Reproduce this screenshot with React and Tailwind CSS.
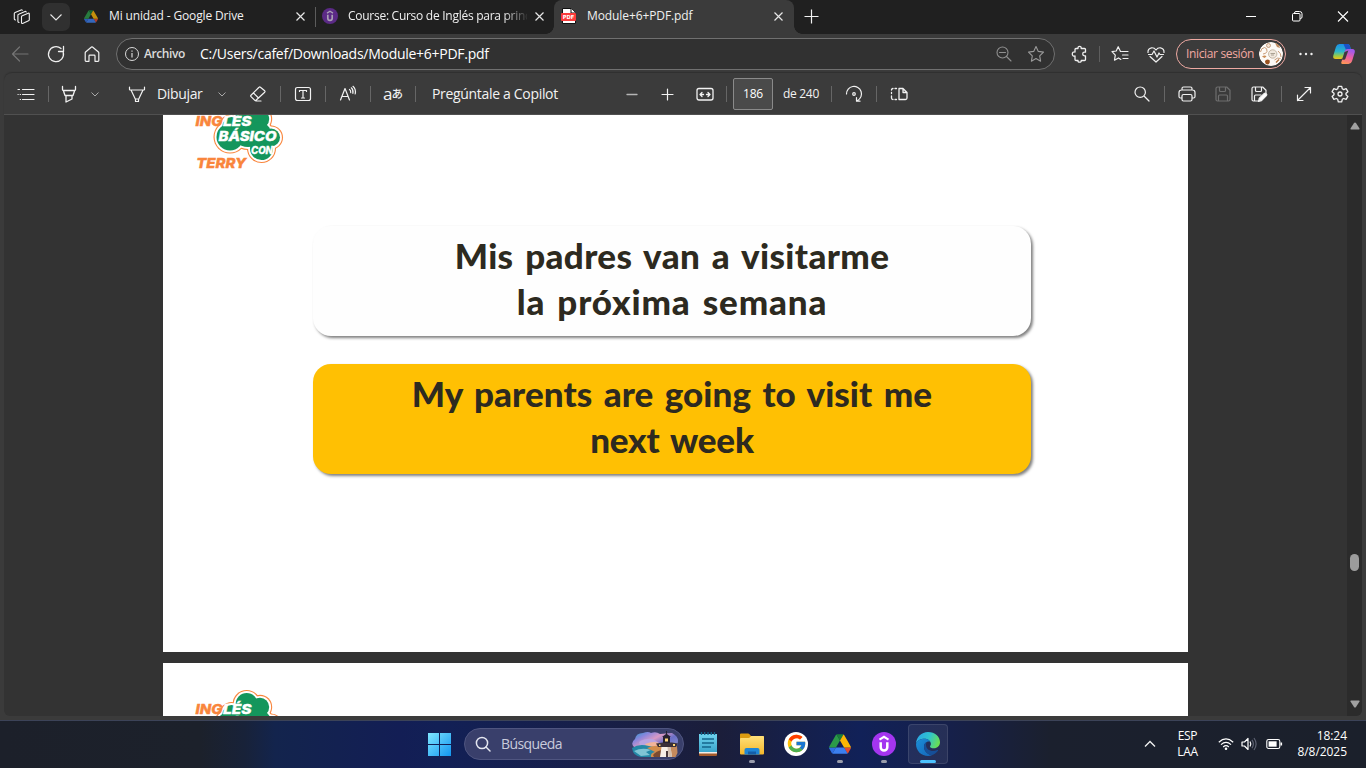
import React from "react";
import { FcGoogle } from "react-icons/fc";

/* 20px line icon; every path is stroked */
function Icon({ d, className = "", sw = 1.1, children, fill = "none" }) {
  return (
    <svg
      viewBox="0 0 20 20"
      className={"h-5 w-5 shrink-0 " + className}
      fill={fill}
      stroke="currentColor"
      strokeWidth={sw}
      strokeLinecap="round"
      strokeLinejoin="round"
    >
      {d && <path d={d} />}
      {children}
    </svg>
  );
}

function Close({ className = "" }) {
  return (
    <svg viewBox="0 0 12 12" className={"h-3 w-3 shrink-0 " + className} fill="none" stroke="#e6e6e6" strokeWidth="1.2">
      <path d="M2.500 2.500l8 8M10.500 2.500l-8 8" />
    </svg>
  );
}

function Drive({ className = "" }) {
  return (
    <svg viewBox="0 0 87.3 78" className={"shrink-0 " + className}>
      <path fill="#2f6fe4" d="m6.6 66.85 3.85 6.65c.8 1.4 1.95 2.5 3.3 3.3l13.75-23.8h-27.5c0 1.55.4 3.1 1.2 4.5z" />
      <path fill="#2b9a48" d="m43.65 25-13.75-23.8c-1.35.8-2.5 1.9-3.3 3.3l-25.4 44a9.06 9.06 0 0 0-1.2 4.5h27.5z" />
      <path fill="#e2492f" d="m73.55 76.8c1.35-.8 2.5-1.9 3.3-3.3l1.6-2.75 7.65-13.25c.8-1.4 1.2-2.95 1.2-4.5h-27.502l5.852 11.5z" />
      <path fill="#188038" d="m43.65 25 13.75-23.8c-1.35-.8-2.9-1.2-4.5-1.2h-18.5c-1.6 0-3.15.45-4.5 1.2z" />
      <path fill="#3b7ff0" d="m59.8 53h-32.3l-13.75 23.8c1.35.8 2.9 1.2 4.5 1.2h50.8c1.6 0 3.15-.45 4.5-1.2z" />
      <path fill="#fbb604" d="m73.4 26.5-12.7-22c-.8-1.4-1.95-2.5-3.3-3.3l-13.75 23.8 16.15 28h27.45c0-1.55-.4-3.1-1.2-4.5z" />
    </svg>
  );
}

function Udemy({ className = "", bg = "#a435f0", fg = "#fff" }) {
  return (
    <svg viewBox="0 0 24 24" className={"shrink-0 " + className}>
      <circle cx="12" cy="12" r="12" fill={bg} />
      <path d="M8.700 10.200v5a3.300 3.300 0 0 0 6.600 0v-5" fill="none" stroke={fg} strokeWidth="2.500" />
      <path d="M7.500 7.600L12 4.800l4.500 2.800" fill="none" stroke={fg} strokeWidth="2" />
    </svg>
  );
}

function TabBar() {
  return (
    <div className="flex h-[34px] shrink-0 items-center bg-[#202020] pb-[2px] text-[12px] text-[#f0f0f0]">
      <Icon className="ml-3" sw={1.1}>
        <path d="M9.500 10.800q0-.8.8-1.100l5.900-2.500q1.100-.4 1.100.8v5.700q0 .8-.8 1.100l-5.900 2.600q-1.100.4-1.100-.8z" />
        <path d="M7 16.500l-.5-.3q-.6-.3-.6-1V9.300q0-.8.8-1.100l6.300-2.700q.8-.3 1.200.4" />
        <path d="M3.400 14l-.5-.3q-.6-.3-.6-1V7.500q0-.8.8-1.100l6-2.500q.8-.3 1.200.3" />
      </Icon>
      <div className="ml-[10px] mt-[2px] flex h-7 w-7 shrink-0 items-center justify-center rounded-[7px] bg-[#303030]">
        <svg viewBox="0 0 14 14" className="h-[14px] w-[14px]" fill="none" stroke="#e8e8e8" strokeWidth="1.1">
          <path d="M1.500 4.500L7 10l5.500-5.500" />
        </svg>
      </div>
      <Drive className="ml-[14px] h-[13px] w-[14px] opacity-75" />
      <div className="ml-[11px] w-[181px] whitespace-nowrap tracking-[-0.14px]">Mi unidad - Google Drive</div>
      <Close className="ml-1" />
      <div className="ml-[9px] mt-[2px] h-5 w-px bg-[#5c5c5c]" />
      <Udemy className="ml-[6px] h-4 w-4" bg="#5b2a86" fg="#aaa0b5" />
      <div className="ml-[10px] w-[179px] overflow-hidden whitespace-nowrap tracking-[-0.27px] [mask-image:linear-gradient(to_right,black_155px,transparent_181px)]">
        Course: Curso de Inglés para princ
      </div>
      <Close className="ml-[6px]" />
      <div className="relative ml-[9px] mt-[2px] flex h-[34px] w-[240px] shrink-0 items-center rounded-t-[8px] bg-[#3b3b3b] pb-[2px]">
        <div className="absolute -left-2 bottom-0 h-2 w-2 bg-[radial-gradient(circle_at_0_0,#202020_7.500px,#3b3b3b_8px)]" />
        <div className="absolute -right-2 bottom-0 h-2 w-2 bg-[radial-gradient(circle_at_100%_0,#202020_7.500px,#3b3b3b_8px)]" />
        <svg viewBox="0 0 16 16" className="ml-[7px] h-4 w-4 shrink-0">
          <path d="M1.500.5h9l4 4v11h-13z" fill="#fff" stroke="#111" />
          <path d="M10 .5v4.500h4.500" fill="#fff" stroke="#111" />
          <rect x="0" y="5" width="15" height="8" rx="1" fill="#fb3b3b" />
          <text x="1.800" y="11" fontSize="5.500" fontWeight="bold" fontFamily="DejaVu Sans" fill="#fff" textLength="11.500" lengthAdjust="spacingAndGlyphs">PDF</text>
        </svg>
        <div className="ml-[10px] w-[181px] whitespace-nowrap tracking-[-0.1px]">Module+6+PDF.pdf</div>
        <Close className="ml-1" />
      </div>
      <svg viewBox="0 0 16 16" className="ml-[9px] h-4 w-4 shrink-0" stroke="#f2f2f2" strokeWidth="1.2">
        <path d="M8.500 1.500v14M1.500 8.500h14" />
      </svg>
      <div className="ml-auto flex items-center gap-[34px] pr-[17px]">
        <svg viewBox="0 0 12 12" className="h-3 w-3" stroke="#fff"><path d="M1 6.500h10" /></svg>
        <svg viewBox="0 0 12 12" className="h-3 w-3" fill="none" stroke="#fff">
          <rect x="1.500" y="3.500" width="7.500" height="7.500" rx="1" />
          <path d="M3.500 3.500V3q0-1.500 1.500-1.500h3.500q2.500 0 2.500 2.200v3.300q0 1.500-1.500 1.500h-.5" />
        </svg>
        <svg viewBox="0 0 12 12" className="h-3 w-3" stroke="#fff" strokeWidth="1.1"><path d="M1 1.500l10 10M11 1.500l-10 10" /></svg>
      </div>
    </div>
  );
}

function Avatar() {
  return (
    <svg viewBox="0 0 24 24" className="ml-[5px] h-6 w-6 shrink-0">
      <clipPath id="av"><circle cx="12" cy="12" r="12" /></clipPath>
      <g clipPath="url(#av)">
        <circle cx="12" cy="12" r="12" fill="#fdfaf6" />
        <path d="M1.500 10q.5-4 4-4.500 3 .5 2.500 4-1 2.500-4 2.500" fill="none" stroke="#c79a76" />
        <circle cx="9.500" cy="3.500" r="2" fill="#f3e2d3" stroke="#b5835c" strokeWidth=".7" />
        <path d="M16 1q4 0 5 5l-3-1z" fill="#c08c62" />
        <path d="M3 14.500q3-2 4.500 0l-2 1.500z" fill="#c98d57" />
        <path d="M6 19q1.500-2.500 4.500-1 1 3-1.500 4.500-3 0-3-3.500z" fill="#9a5220" />
        <path d="M15.500 18q3-3 6-1.500M19 9q3 2 3 6" fill="none" stroke="#c79a76" />
        <path d="M17 20.500l3-3" stroke="#b5713c" strokeWidth="1.500" />
        <circle cx="13.700" cy="12" r="4.200" fill="#f0e8dd" stroke="#b9ab98" strokeWidth=".8" />
        <path d="M11.500 11.500h4.500M12 13h3" stroke="#9b9080" strokeWidth=".8" />
      </g>
    </svg>
  );
}

function Copilot() {
  return (
    <svg viewBox="0 0 24 24" className="ml-[18px] h-6 w-6 shrink-0">
      <defs>
        <linearGradient id="cpa" x1="0" y1="0" x2="0" y2="1">
          <stop offset="0" stopColor="#1b8fe8" /><stop offset=".5" stopColor="#2db6c8" /><stop offset=".8" stopColor="#9ccb45" /><stop offset="1" stopColor="#f2c21a" />
        </linearGradient>
        <linearGradient id="cpb" x1=".3" y1="0" x2="0" y2="1">
          <stop offset="0" stopColor="#a259e8" /><stop offset=".45" stopColor="#ee5fa0" /><stop offset="1" stopColor="#ffa04a" />
        </linearGradient>
      </defs>
      <path d="M7.500 2h8q1.800 0 2.400 1.800L18.700 7h-3q-1.600 0-2.200 1.700L11 15.500Q10.300 17 8.500 17H3.800q-3.300 0-2.500-3.500L4 4.800Q4.900 2 7.500 2z" fill="url(#cpa)" />
      <path d="M11.500 2h4q1.800 0 2.400 1.800L18.700 7h-3q-1.200 0-1.800.8z" fill="#1b52c9" />
      <path d="M16.500 22h-6q-1.300 0-1.300-1.500L11 15.300 13 8.700Q13.700 7 15.500 7h4.700q3.300 0 2.500 3.500L20 19.200Q19.100 22 16.500 22z" fill="url(#cpb)" />
      <path d="M16.300 8.500L13.300 17q-.3.800-1.200.8h-2L12.500 10z" fill="#3b3b3b" />
    </svg>
  );
}

function AddressBar() {
  return (
    <div className="flex h-[39px] shrink-0 items-center bg-[#3b3b3b] text-[#f0f0f0]">
      <Icon className="ml-[10px] text-[#747474]" d="M18 10H2.500M9.500 3L2.500 10l7 7" sw={1.2} />
      <Icon className="ml-4" sw={1.3} d="M17.300 8.500A7.500 7.500 0 1 1 15 4.600M17.500 2.500v5h-5" />
      <Icon className="ml-4" sw={1.2} d="M3.200 8.900v7.600q0 .8.800.8h3V12q0-.8.800-.8h4.400q.8 0 .8.800v5.300h3q.8 0 .8-.8V8.900q0-.5-.4-.9L10.500 3q-.5-.4-1 0L3.600 8q-.4.400-.4.900z" />
      <div className="ml-[14px] flex h-8 w-[939px] shrink-0 items-center rounded-full border border-[#707070] bg-[#313131]">
        <svg viewBox="0 0 16 16" className="ml-[7px] h-4 w-4 shrink-0" fill="none" stroke="#d8d8d8">
          <circle cx="8" cy="8" r="6.500" /><path d="M8 7v4.500M8 4.500v1.200" strokeWidth="1.2" />
        </svg>
        <div className="ml-1 w-[56px] whitespace-nowrap text-[12px] font-semibold tracking-[-0.4px] text-[#dcdcdc]">Archivo</div>
        <div className="w-[795px] whitespace-nowrap text-[14px] tracking-[-0.27px] text-white">C:/Users/cafef/Downloads/Module+6+PDF.pdf</div>
        <Icon className="-ml-px text-[#8f8f8f]" d="M12.500 12.500l4.500 4.500M5.500 8.500h6">
          <circle cx="8.500" cy="8.500" r="5.500" />
        </Icon>
        <Icon className="ml-3 text-[#9a9a9a]" d="M10 2.500l2.300 4.900 5.200.7-3.800 3.700.9 5.400L10 14.600l-4.600 2.600.9-5.400L2.500 8.100l5.200-.7z" />
      </div>
      <Icon className="ml-[14px]" sw={1.3} d="M7 4.500h2q-.2-2.200 1.600-2.200t1.600 2.200h3.300q1 0 1 1v2.700h-1q-1.800 0-1.800 1.800t1.800 1.800h1v3.700q0 1-1 1h-3.300q.3 1.700-1.600 1.700t-1.600-1.700H7q-1 0-1-1v-3.500q-2.700.3-2.700-2t2.700-2V5.500q0-1 1-1z" />
      <div className="ml-[10px] h-4 w-px bg-[#5e5e5e]" />
      <Icon className="ml-[10px]" sw={1.2} d="M11.500 7.500H18M12.500 11H18M13 14.500h5M10.500 7.400L8.200 2.700 6.200 7 2 7.700l3.300 3.400-.8 5.100 4-2.300 2.300 1.500" />
      <Icon className="ml-4" sw={1.2} d="M2 8.500Q1.700 4.500 5.500 3.800q2.700-.3 4.500 2.200 1.800-2.500 4.500-2.200 3.800.7 3.500 4.700M4 12.500l6 5.500 6-5.500M2.500 10.500H6l2-3.500 3 6 2-4 1 1.500h3.500" />
      <div className="ml-[10px] flex h-[30px] w-[110px] shrink-0 items-center rounded-full border border-[#eea9a2]">
        <div className="ml-[9px] w-[68px] whitespace-nowrap text-[12px] tracking-[-0.35px] text-[#f2a9a2]">Iniciar sesión</div>
        <Avatar />
      </div>
      <svg viewBox="0 0 16 16" className="ml-3 h-4 w-4 shrink-0" fill="#f0f0f0">
        <circle cx="2.500" cy="8" r="1.200" /><circle cx="8" cy="8" r="1.200" /><circle cx="13.500" cy="8" r="1.200" />
      </svg>
      <Copilot />
    </div>
  );
}

const Sep = ({ className = "" }) => <div className={"h-4 w-px shrink-0 bg-[#666] " + className} />;

function Chevron({ className = "" }) {
  return (
    <svg viewBox="0 0 10 10" className={"h-[10px] w-[10px] shrink-0 " + className} fill="none" stroke="#a8a8a8">
      <path d="M1.500 3.500L5 7l3.500-3.500" />
    </svg>
  );
}

const SAVE = "M4.500 3h9.200L17 6.200v9.300q0 1.500-1.500 1.500h-11Q3 17 3 15.500v-11Q3 3 4.500 3zM6.500 3v3.500q0 1 1 1h4q1 0 1-1V3M5.500 17v-5q0-1 1-1h7q1 0 1 1v5";

function PdfToolbar() {
  return (
    <div className="mx-1 flex h-[42px] shrink-0 items-center rounded-t-[8px] border-b border-[#505050] bg-[#3b3b3b] text-[14px] text-[#f2f2f2] shadow-[0_-1px_1px_#303030]">
      <Icon className="ml-3" sw={1.2} d="M6.500 5.500H18M6.500 10.500H18M6.500 15.500H18M2 5.500h1.500M4.200 10.500h.3M4.200 15.500h.3M2 10.500h.2" />
      <Sep className="ml-[12px]" />
      <Icon className="ml-[10px]" sw={1.3} d="M3.500 2.500v3q0 1 1 1h11q1 0 1-1v-3M4.500 7l1.500 4.500h8L15.500 7M7 11.500V18l6-3v-3.500" />
      <Chevron className="ml-[11px]" />
      <Icon className="ml-[27px]" sw={1.2} d="M2.500 3v2.500q0 .5.500.5h14q.5 0 .5-.5V3M4 6l4.500 9.500v2h3v-2L16 6M8.500 15h3" />
      <div className="ml-[10px] w-[45px] whitespace-nowrap tracking-[-0.35px]">Dibujar</div>
      <Chevron className="ml-[15px]" />
      <Icon className="ml-[21px]" sw={1.2} d="M11 3.300L3 11.200q-.7.700 0 1.400l3.600 3.600q.7.700 1.400 0l8.700-8q.7-.7 0-1.400L12.400 3.200q-.7-.6-1.400.1zM5.500 9l5 5M8 17h5" />
      <Sep className="ml-[12px]" />
      <Icon className="ml-[12px]" sw={1.2} d="M4.500 3.500h11q2 0 2 2v9q0 2-2 2h-11q-2 0-2-2v-9q0-2 2-2zM6.500 7.500V6.500h7v1M10 6.500v7.500M8.500 14h3" />
      <Sep className="ml-[12px]" />
      <Icon className="ml-[12px]" sw={1.2} d="M2.500 16L7 4.500 11.500 16M4 12.500h6M11.500 5.500q1.500 1 1.200 3.200M13.300 3.800q2.300 2 1.600 5.500M15 2.300q3.200 2.900 2.200 7.700" />
      <Sep className="ml-[12px]" />
      <div className="ml-[9px] flex w-[26px] items-center whitespace-nowrap pl-[3px]">
        <span className="text-[17px] leading-none tracking-[-1px]">a</span>
        <span className="font-['Noto_Sans_CJK_JP',sans-serif] text-[11.500px] font-medium leading-none">あ</span>
      </div>
      <Sep className="ml-[9px]" />
      <div className="ml-4 w-[126px] whitespace-nowrap tracking-[-0.32px]">Pregúntale a Copilot</div>
      <Icon className="ml-[64px] text-[#b5b5b5]" sw={1.3} d="M5 10.500h10" />
      <Icon className="ml-[15px]" sw={1.2} d="M5 10.500h11M10.500 5v11" />
      <Icon className="ml-[18px]" sw={1.3} d="M4 4.500h12q2 0 2 2v7.500q0 2-2 2H4q-2 0-2-2V6.500q0-2 2-2zM7 8.500L5 10.500l2 2M5 10.500h3.500M13 8.500l2 2-2 2M15 10.500h-3.500" />
      <Sep className="ml-[11px]" />
      <div className="ml-[6px] flex h-8 w-10 shrink-0 items-center justify-center rounded-[2px] border border-[#8a8a8a] bg-[#4a4a4a] text-[12px] tracking-[-0.2px] text-white">186</div>
      <div className="ml-[10px] w-[36px] whitespace-nowrap text-[12px] tracking-[-0.3px]">de 240</div>
      <Sep className="ml-[12px]" />
      <Icon className="ml-[12px]" sw={1.2} d="M2.500 10A7.500 7.500 0 1 1 13.500 16.500M12.500 13.500v3.700H16">
        <circle cx="10" cy="10" r="1.300" />
      </Icon>
      <Sep className="ml-[12px]" />
      <Icon className="ml-[12px]" sw={1.3} d="M10 4.500h4l4 4v5.500q0 1.500-1.500 1.500H10zM14 4.500v4h4M7.500 4.500H6M4 4.500q-1.500 0-1.500 1.500M2.500 8.500v1M2.500 12v2q0 1.500 1.500 1.500M6 15.500h1.500" />
      <Icon className="ml-auto" sw={1.2} d="M12.500 12.500L17 17"><circle cx="8.200" cy="8.200" r="5.200" /></Icon>
      <Sep className="ml-[12px]" />
      <Icon className="ml-[12px]" sw={1.2} d="M5 6V4.500Q5 3 6.500 3h7Q15 3 15 4.500V6M5 14H3.500Q2 14 2 12.500V8.500Q2 6 4.500 6h11Q18 6 18 8.500v4q0 1.500-1.500 1.500H15M6.500 10.500h7q1.500 0 1.500 1.500v3.500q0 1.500-1.500 1.500h-7Q5 17 5 15.500V12q0-1.500 1.500-1.500z" />
      <Icon className="ml-4 text-[#6e6e6e]" sw={1.2} d={SAVE} />
      <Icon className="ml-4" sw={1.2}>
        <path d="M9 17H4.500Q3 17 3 15.500v-11Q3 3 4.500 3h9.200L17 6.200V8.500M6.500 3v3.500q0 1 1 1h4q1 0 1-1V3M5.500 17v-5q0-1 1-1H12" />
        <path d="M9.500 17.500l.8-3.200 5-4.800q1-.9 2 .1t.1 2l-4.900 5z" fill="#fff" />
      </Icon>
      <Sep className="ml-[12px]" />
      <Icon className="ml-[12px]" sw={1.2} d="M3.500 16.500l13-13M11 3.500h5.500V9M3.500 11v5.500H9" />
      <Icon className="ml-4 mr-3" sw={1.3}>
        <path d="M8.300 2.300h3.400l.6 2.500 1.400.8 2.400-.9 1.800 3-1.900 1.600v1.500l1.900 1.600-1.800 3-2.400-.9-1.400.8-.6 2.500H8.300l-.6-2.500-1.400-.8-2.400.9-1.800-3L4 10.800V9.300L2.100 7.700l1.800-3 2.400.9 1.400-.8z" />
        <circle cx="10" cy="10" r="2" />
      </Icon>
    </div>
  );
}

const BUMPS = [
  [53.7, 15, 11], [67, 18, 9.2], [38.5, 25, 9], [78, 36.5, 9], [68.5, 47.5, 11.5], [37, 36, 13.5], [55, 29, 17], [66, 33, 12],
];

function Logo() {
  const face = { fontFamily: "Inter, 'Liberation Sans', sans-serif", fontWeight: 800, fontStyle: "italic" };
  return (
    <svg viewBox="0 0 94 70" className="absolute left-[30px] top-[26px] h-[70px] w-[94px]">
      {BUMPS.map(([x, y, r], i) => <circle key={"o" + i} cx={x} cy={y} r={r + 3} fill="#f9853c" />)}
      {BUMPS.map(([x, y, r], i) => <circle key={"w" + i} cx={x} cy={y} r={r + 1.9} fill="#fff" />)}
      {BUMPS.map(([x, y, r], i) => <circle key={"g" + i} cx={x} cy={y} r={r} fill="#14965c" />)}
      <g style={face}>
        <text x="2.500" y="25" fontSize="13.800" fill="#f9853c" stroke="#f9853c" strokeWidth=".4" textLength="27" lengthAdjust="spacingAndGlyphs">ING</text>
        <text x="30" y="25" fontSize="13.800" fill="#fff" stroke="#fff" strokeWidth=".4" textLength="28.500" lengthAdjust="spacingAndGlyphs">LÉS</text>
        <text x="25.500" y="39.500" fontSize="13.500" fill="#fff" stroke="#fff" strokeWidth=".4" textLength="58" lengthAdjust="spacingAndGlyphs">BÁSICO</text>
        <text x="58" y="53.300" fontSize="10" fill="#fff" stroke="#fff" strokeWidth=".3" textLength="22" lengthAdjust="spacingAndGlyphs">CON</text>
        <text x="3.200" y="66.500" fontSize="13.800" fill="#f9853c" stroke="#f9853c" strokeWidth=".4" textLength="50" lengthAdjust="spacingAndGlyphs">TERRY</text>
      </g>
    </svg>
  );
}

function Slide({ children }) {
  return (
    <div className="relative h-[577px] w-[1025px] shrink-0 bg-white">
      <Logo />
      {children}
    </div>
  );
}

function Viewer() {
  return (
    <div className="mx-1 flex h-[601px] shrink-0 overflow-hidden rounded-b-[6px] bg-[#333]">
      <div className="flex w-[1343px] shrink-0 flex-col gap-[11px] overflow-hidden pl-[159px]">
        <div className="-mt-10 shrink-0">
          <Slide>
            <div className="flex flex-col gap-7 pl-[150px] pt-[151px] text-center font-['Lato',sans-serif] text-[35px] font-black leading-[46px] text-[#2d2a20] [word-spacing:3px]">
              <div className="h-[110px] w-[718px] rounded-[18px] bg-[#fefefe] pt-[6px] shadow-[2px_2px_3px_rgba(0,0,0,0.5)]">
                <div className="whitespace-nowrap tracking-[0.37px]">Mis padres van a visitarme</div>
                <div className="whitespace-nowrap tracking-[0.85px]">la próxima semana</div>
              </div>
              <div className="h-[110px] w-[718px] rounded-[18px] bg-[#ffc003] pt-[6px] shadow-[2px_2px_3px_rgba(0,0,0,0.5)]">
                <div className="whitespace-nowrap tracking-[0.07px]">My parents are going to visit me</div>
                <div className="whitespace-nowrap tracking-[-0.2px]">next week</div>
              </div>
            </div>
          </Slide>
        </div>
        <Slide />
      </div>
      <div className="flex w-[15px] flex-col items-center bg-[#2b2b2b]">
        <svg viewBox="0 0 10 8" className="mt-[7px] h-2 w-[10px]" fill="#a0a0a0"><path d="M5 .5q.6 0 1 .6l3.500 5.400q.3 1-.6 1H1.100q-.9 0-.6-1L4 1.100q.4-.6 1-.6z" /></svg>
        <div className="mt-[424px] h-[17px] w-[9px] rounded-full bg-[#9c9c9c]" />
        <svg viewBox="0 0 10 8" className="mb-2 mt-auto h-2 w-[10px]" fill="#a0a0a0"><path d="M5 7.500q.6 0 1-.6l3.500-5.400q.3-1-.6-1H1.100q-.9 0-.6 1L4 6.900q.4.600 1 .6z" /></svg>
      </div>
    </div>
  );
}

function Lighthouse() {
  return (
    <svg viewBox="0 0 48 26" className="ml-auto mr-[4px] h-[26px] w-[48px] shrink-0">
      <defs>
        <linearGradient id="sky" x1="0" y1="0" x2="1" y2=".6">
          <stop offset="0" stopColor="#1f9bc8" /><stop offset=".3" stopColor="#8a86dc" /><stop offset=".55" stopColor="#d99ac4" /><stop offset=".8" stopColor="#6a6fc8" /><stop offset="1" stopColor="#7a80c8" />
        </linearGradient>
      </defs>
      <path d="M4 8q1-6 8-6 5-2 8 0 5-2 9 1l12-1q6 3 6 8 0 4-2 6H3q-4-4 1-8z" fill="url(#sky)" />
      <path d="M8 11q6-4 14-3l6 4-2 4-16 1z" fill="#b9a3e0" />
      <path d="M14 13q10-4 16 0v4H16z" fill="#f0b49a" />
      <path d="M1 17q7-5 17-2l9 2-4 9H10q-8-1-9-9z" fill="#2488a6" />
      <path d="M3 20q8-4 17-1l-5 2 4 3-9 1z" fill="#7fc4d4" />
      <path d="M16 17q10-4 16-1l4 6-6 4H20q-1-4 4-5z" fill="#d18d4c" />
      <path d="M22 24q3-4 9-5v7h-8z" fill="#7a4a30" />
      <path d="M40 14l6 1 .500 7-2 4H40z" fill="#c58a5c" />
      <path d="M30.500 16h9l1.500 10H29z" fill="#f7efe6" />
      <path d="M36.500 16h3L41 26h-3.500z" fill="#d3bfae" />
      <path d="M35 20h2v6h-2z" fill="#4a3a3c" />
      <path d="M25 12.500l7-1h9l6 1-2 3.500H27z" fill="#3a3038" />
      <path d="M32 6h7v6h-7zM31 6l4-3V0h1v3l4 3z" fill="#262230" />
      <path d="M34 7.500h3v3h-3z" fill="#ffd777" />
      <path d="M42 13h2v2h-2zM28 13.500h1.500V15H28z" fill="#ffd777" />
    </svg>
  );
}

function Edge() {
  return (
    <svg viewBox="0 0 24 24" className="h-6 w-6">
      <defs>
        <linearGradient id="ea" x1="0" y1=".3" x2="1" y2=".6">
          <stop offset="0" stopColor="#2aa5e6" /><stop offset=".5" stopColor="#2fc3cf" /><stop offset="1" stopColor="#6ce04c" />
        </linearGradient>
        <linearGradient id="eb" x1="0" y1="0" x2="1" y2="1">
          <stop offset="0" stopColor="#1b8fd8" /><stop offset="1" stopColor="#1565b8" />
        </linearGradient>
      </defs>
      <path d="M0 11.500C.4 5 5.500 0 12 0c7 0 12 4.800 12 10.300 0 3.600-2.800 6-6 6-2.600 0-4-1-4-1.900 0-.6.900-1 .9-2.700C14.900 9.500 12.500 6.700 8.500 6.700 4 6.700 1 9 0 11.500z" fill="url(#ea)" />
      <path d="M0 12c.8-3.200 4-5.300 8.300-5.300 3 0 5 1.300 6 3-3.500-1-6.300 1.800-6.300 5 0 5 4.600 8.300 8.300 8.300C14.800 23.700 13.400 24 12 24 5.500 24 0 19 0 12z" fill="url(#eb)" />
      <path d="M9.500 10.700C8.600 11.700 8 13.200 8 14.700c0 5 4.600 8.300 8.300 8.300 2.400-.9 4.300-2.500 5.600-4.300.4-.6-.1-1-.6-.7-4.900 2.400-11.300.3-11.300-5 0-.9.200-1.600.5-2.200z" fill="#164f98" />
    </svg>
  );
}

function TaskItem({ children, active = false, running = false }) {
  return (
    <div className={"relative flex h-10 w-10 shrink-0 items-center justify-center rounded-[4px] " + (active ? "border border-white/10 bg-white/[0.07]" : "")}>
      {children}
      {running && <div className="absolute bottom-[1px] h-[3px] w-[6px] rounded-full bg-[#9a9dac]" />}
      {active && <div className="absolute bottom-0 h-[3px] w-4 rounded-full bg-[#4cc2ff]" />}
    </div>
  );
}

function Taskbar() {
  return (
    <div className="flex h-[48px] shrink-0 items-center border-t border-[#3c4358] bg-[linear-gradient(90deg,#1c202a_0px,#1c212b_200px,#182239_245px,#13244d_275px,#131e55_400px,#122056_440px,#181f48_600px,#1b1e3a_720px,#112158_860px,#16204a_950px,#1b202e_1050px,#1b202b_1366px)] pb-[2px]">
      <svg viewBox="0 0 23 23" className="ml-[428px] mt-px h-[23px] w-[23px] shrink-0">
        <defs>
          <linearGradient id="win" x1="0" y1="0" x2="1" y2="1">
            <stop offset="0" stopColor="#7fe6ff" /><stop offset="1" stopColor="#1296f0" />
          </linearGradient>
        </defs>
        <path d="M0 0h11v11H0zM12 0h11v11H12zM0 12h11v11H0zM12 12h11v11H12z" fill="url(#win)" />
      </svg>
      <div className="ml-[13px] flex h-8 w-[220px] shrink-0 items-center rounded-full border border-[#4f5580] bg-[#393f6b]">
        <svg viewBox="0 0 16 16" className="ml-[10px] h-4 w-4 shrink-0" fill="none" stroke="#e4e6f0" strokeWidth="1.5" strokeLinecap="round">
          <circle cx="7" cy="7" r="5.600" /><path d="M11 11l4 4" />
        </svg>
        <div className="ml-[10px] whitespace-nowrap text-[14px] tracking-[-0.6px] text-[#c9cbdc]">Búsqueda</div>
        <Lighthouse />
      </div>
      <div className="ml-1 flex gap-1">
        <TaskItem>
          <svg viewBox="0 0 18 24" className="h-6 w-[18px]">
            <defs><linearGradient id="np" x1="0" y1="0" x2="0" y2="1"><stop offset="0" stopColor="#6fd3ee" /><stop offset="1" stopColor="#3ba6cc" /></linearGradient></defs>
            <path d="M0 19h18v4q0 1-1 1H1q-1 0-1-1z" fill="#a35a2b" /><path d="M0 19h18v2.500H0z" fill="#f1ece6" />
            <path d="M0 2h18v18H0z" fill="url(#np)" />
            <path d="M2.500 0v3M5.700 0v3M9 0v3M12.300 0v3M15.500 0v3" stroke="#126287" strokeWidth="1.3" />
            <path d="M3 7h12M3 11h12M3 15h9" stroke="#14658c" strokeWidth="1.6" />
          </svg>
        </TaskItem>
        <TaskItem running>
          <svg viewBox="0 0 24 22" className="h-[22px] w-6">
            <defs><linearGradient id="fo" x1="0" y1="0" x2="0" y2="1"><stop offset="0" stopColor="#ffe07a" /><stop offset="1" stopColor="#f5b72a" /></linearGradient></defs>
            <path d="M0 1.500Q0 .5 1 .5h7q1 0 1.500.8L11 3h12q1 0 1 1v5H0z" fill="#dc9b10" />
            <path d="M0 6q0-1 1-1h7.500q1 0 1.500-.7T11.500 3H23q1 0 1 1v16.500q0 1-1 1H1q-1 0-1-1z" fill="url(#fo)" />
            <path d="M4.500 17q0-2 2-2h11q2 0 2 2v4.500h-15z" fill="#1f86d6" /><path d="M8 18.500h8v3H8z" fill="#145ea8" />
          </svg>
        </TaskItem>
        <TaskItem>
          <div className="flex h-6 w-6 items-center justify-center rounded-full bg-white"><FcGoogle className="h-[21px] w-[21px]" /></div>
        </TaskItem>
        <TaskItem running><Drive className="h-[20px] w-[22px]" /></TaskItem>
        <TaskItem running><Udemy className="h-6 w-6" /></TaskItem>
        <TaskItem active><Edge /></TaskItem>
      </div>
      <svg viewBox="0 0 12 12" className="ml-[196px] h-3 w-3 shrink-0" fill="none" stroke="#f2f2f2" strokeWidth="1.3"><path d="M1 8.500L6 3.500l5 5" /></svg>
      <div className="ml-[17px] w-[29px] text-center text-[12px] leading-4 tracking-[-0.3px] text-white">ESP<br />LAA</div>
      <svg viewBox="0 0 16 16" className="ml-[16px] h-4 w-4 shrink-0" fill="none" stroke="#fff" strokeWidth="1.2">
        <path d="M.8 6.200q7.200-6.500 14.400 0M3 8.600q5-4.600 10 0M5.200 11q2.800-2.600 5.600 0" /><circle cx="8" cy="12.800" r="1.300" fill="#fff" stroke="none" />
      </svg>
      <svg viewBox="0 0 16 16" className="ml-[7px] h-4 w-4 shrink-0" fill="none" stroke="#fff" strokeWidth="1.2" strokeLinejoin="round">
        <path d="M1 6h2.500L7 2.500v11L3.500 10H1z" /><path d="M9 5.500q1.600 2.500 0 5" /><path d="M11 3.800q2.800 4.200 0 8.400M13 2q4.200 6 0 12" stroke="#5c6070" />
      </svg>
      <svg viewBox="0 0 17 16" className="ml-[9px] h-4 w-[17px] shrink-0" fill="none" stroke="#fff" strokeWidth="1.1">
        <rect x=".8" y="3.500" width="13" height="9" rx="1.800" /><rect x="2.600" y="5.300" width="8" height="5.400" fill="#fff" stroke="none" /><path d="M15.300 6.500v3" strokeWidth="1.600" />
      </svg>
      <div className="ml-auto mr-[19px] whitespace-nowrap text-right text-[12px] leading-4 tracking-[-0.05px] text-white">18:24<br />8/8/2025</div>
    </div>
  );
}

export default function App() {
  return (
    <div className="flex h-[768px] w-[1366px] flex-col overflow-hidden bg-[#3b3b3b] font-['Open_Sans','Noto_Sans',sans-serif]">
      <TabBar />
      <AddressBar />
      <PdfToolbar />
      <Viewer />
      <div className="h-1 shrink-0 bg-[#3b3b3b]" />
      <Taskbar />
    </div>
  );
}
